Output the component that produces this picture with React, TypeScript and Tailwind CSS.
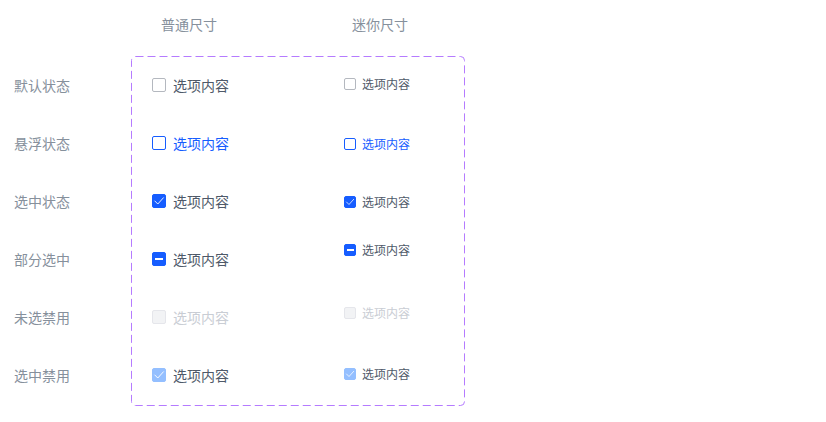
import React from 'react';

type State = 'default' | 'hover' | 'checked' | 'partial' | 'disabled' | 'checkedDisabled';

const rows: { label: string; state: State; miniShift: string }[] = [
  { label: '默认状态', state: 'default', miniShift: '-mt-[2px]' },
  { label: '悬浮状态', state: 'hover', miniShift: 'mt-[2px]' },
  { label: '选中状态', state: 'checked', miniShift: 'mt-[2px]' },
  { label: '部分选中', state: 'partial', miniShift: '-mt-[18px]' },
  { label: '未选禁用', state: 'disabled', miniShift: '-mt-[8px]' },
  { label: '选中禁用', state: 'checkedDisabled', miniShift: '-mt-[2px]' },
];

const font = { fontFamily: '"Noto Sans CJK SC", "Noto Sans", sans-serif' };

function Box({ state, size }: { state: State; size: number }) {
  const base = 'flex shrink-0 items-center justify-center rounded-[2px] border';
  const look: Record<State, string> = {
    default: 'border-[#b4b8bf] bg-white',
    hover: 'border-[#165dff] bg-white',
    checked: 'border-[#165dff] bg-[#165dff]',
    partial: 'border-[#165dff] bg-[#165dff]',
    disabled: 'border-[#e5e6eb] bg-[#f2f3f5]',
    checkedDisabled: 'border-[#94bfff] bg-[#94bfff]',
  };
  const dim = size === 14 ? 'h-[14px] w-[14px]' : 'h-[12px] w-[12px]';
  return (
    <span className={`${base} ${look[state]} ${dim}`}>
      {(state === 'checked' || state === 'checkedDisabled') && (
        <svg width={size - 2} height={size - 2} viewBox="0 0 12 12" fill="none">
          <path d="M1.8 6 4.8 9 10.4 2.8" stroke="white" strokeWidth="0.9" strokeLinecap="round" strokeLinejoin="round" />
        </svg>
      )}
      {state === 'partial' && (
        <span className={size === 14 ? 'h-[2px] w-[8px] bg-white' : 'h-[2px] w-[7px] bg-white'} />
      )}
    </span>
  );
}

function Option({ state, mini }: { state: State; mini?: boolean }) {
  const color =
    state === 'hover' ? 'text-[#165dff]' : state === 'disabled' ? 'text-[#c9cdd4]' : 'text-[#4e5969]';
  return (
    <div className={`flex items-center ${mini ? 'gap-[6px]' : 'gap-[7px]'}`}>
      <Box state={state} size={mini ? 12 : 14} />
      <span className={`${color} ${mini ? 'text-[12px]' : 'text-[14px]'} leading-none`}>选项内容</span>
    </div>
  );
}

export default function App() {
  return (
    <div className="h-[422px] w-[826px] bg-white" style={font}>
      <div className="flex h-[56px] items-center pb-[7px] text-[14px] text-[#86909c]">
        <span className="ml-[161px]">普通尺寸</span>
        <span className="ml-[135px]">迷你尺寸</span>
      </div>
      <div className="flex">
        <div className="w-[131px]">
          {rows.map((r) => (
            <div key={r.label} className="flex h-[58px] items-center pl-[14px] text-[14px] text-[#86909c]">
              {r.label}
            </div>
          ))}
        </div>
        <div className="relative h-[350px] w-[334px]">
          <svg className="pointer-events-none absolute inset-0" width="334" height="350" fill="none">
            <rect x="0.5" y="0.5" width="333" height="349" rx="4" stroke="#b57bff" strokeDasharray="8 4" />
          </svg>
          {rows.map((r) => (
            <div key={r.label} className="flex h-[58px] items-center">
              <div className="w-[213px] pl-[21px]">
                <Option state={r.state} />
              </div>
              <div className={`${r.miniShift}`}>
                <Option state={r.state} mini />
              </div>
            </div>
          ))}
        </div>
      </div>
    </div>
  );
}
